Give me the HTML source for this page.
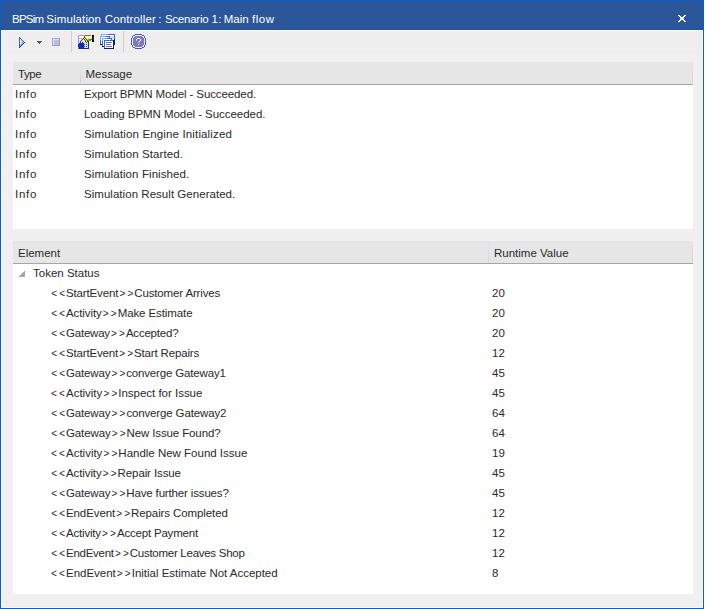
<!DOCTYPE html>
<html><head><meta charset="utf-8">
<style>
*{box-sizing:border-box;margin:0;padding:0}
html,body{width:705px;height:609px;overflow:hidden;background:#fff}
body{position:relative;font-family:"Liberation Sans",sans-serif;font-size:11.5px;color:#2a2a2a}
#win{position:absolute;left:0;top:0;width:704px;height:609px;background:#0b5fcb}
#title{position:absolute;left:1px;top:1px;width:702px;height:29px;background:#2b579a;border-bottom:1px solid #21509a}
#title .t{position:absolute;left:11px;top:10px;color:#fff;white-space:pre;line-height:16px}
#client{position:absolute;left:1px;top:30px;width:702px;height:578px;background:#f0f0f0;border:1px solid #fdfaf2}
.panel{position:absolute;left:13px;width:680px;background:#fefefe}
.hdr{position:absolute;left:0;top:0;width:680px;height:23px;background:#e6e6e6;border-bottom:1px solid #a5a5a5}
.sep{position:absolute;top:1px;width:1px;height:20px;background:linear-gradient(#e6e6e6,#d2d2d2)}
.txt{position:absolute;white-space:pre;line-height:20px;height:20px}
.ch{display:inline-block;width:8px;text-align:center;font-size:10px}
#tb{position:absolute;left:0;top:0}
</style></head><body>
<div id="win">
  <div id="title"><span class="t" style="left:11.05px;letter-spacing:-0.8px">BPSim</span><span class="t" style="left:45.34px;letter-spacing:0.103px">Simulation</span><span class="t" style="left:103.73px;letter-spacing:0.142px">Controller</span><span class="t" style="left:157.3px;letter-spacing:0px">:</span><span class="t" style="left:163.9px;letter-spacing:-0.236px">Scenario</span><span class="t" style="left:210.46px;letter-spacing:0.434px">1:</span><span class="t" style="left:222.85px;letter-spacing:-0.078px">Main</span><span class="t" style="left:250.88px;letter-spacing:0.6px">flow</span>
</div>
  <svg style="position:absolute;left:0;top:0" width="705" height="30" shape-rendering="crispEdges"><rect x="678" y="15" width="2" height="1" fill="#ffffff"/>
<rect x="684" y="15" width="2" height="1" fill="#ffffff"/>
<rect x="679" y="16" width="2" height="1" fill="#ffffff"/>
<rect x="683" y="16" width="2" height="1" fill="#ffffff"/>
<rect x="680" y="17" width="4" height="1" fill="#ffffff"/>
<rect x="680" y="18" width="1" height="1" fill="#a8bcdc"/>
<rect x="681" y="18" width="2" height="1" fill="#ffffff"/>
<rect x="683" y="18" width="1" height="1" fill="#a8bcdc"/>
<rect x="680" y="19" width="4" height="1" fill="#ffffff"/>
<rect x="679" y="20" width="2" height="1" fill="#ffffff"/>
<rect x="683" y="20" width="2" height="1" fill="#ffffff"/>
<rect x="678" y="21" width="2" height="1" fill="#ffffff"/>
<rect x="684" y="21" width="2" height="1" fill="#ffffff"/></svg>
</div>
<div id="client"></div>
<div style="position:absolute;left:8px;top:31px;width:694px;height:23px;background:#eeeeee"></div>
<svg id="tb" width="705" height="60" viewBox="0 0 705 60">
  <defs>
    <linearGradient id="gwin" x1="0" y1="0" x2="1" y2="1"><stop offset="0" stop-color="#8ab8f0"/><stop offset="1" stop-color="#0a2a80"/></linearGradient>
    <linearGradient id="gfront" x1="0" y1="0" x2="1" y2="1"><stop offset="0" stop-color="#4a7ad8"/><stop offset="1" stop-color="#101860"/></linearGradient>
  </defs>
  <g shape-rendering="crispEdges">
<rect x="19" y="37" width="1" height="1" fill="#5a4fc8"/>
<rect x="19" y="38" width="2" height="1" fill="#5a4fc8"/>
<rect x="19" y="39" width="1" height="1" fill="#5a4fc8"/>
<rect x="20" y="39" width="1" height="1" fill="#f2f8ff"/>
<rect x="21" y="39" width="1" height="1" fill="#5a4fc8"/>
<rect x="19" y="40" width="1" height="1" fill="#5a4fc8"/>
<rect x="20" y="40" width="1" height="1" fill="#f2f8ff"/>
<rect x="21" y="40" width="1" height="1" fill="#a6cef2"/>
<rect x="22" y="40" width="1" height="1" fill="#5a4fc8"/>
<rect x="19" y="41" width="1" height="1" fill="#5a4fc8"/>
<rect x="20" y="41" width="1" height="1" fill="#f2f8ff"/>
<rect x="21" y="41" width="2" height="1" fill="#a6cef2"/>
<rect x="23" y="41" width="1" height="1" fill="#5a4fc8"/>
<rect x="19" y="42" width="1" height="1" fill="#5a4fc8"/>
<rect x="20" y="42" width="1" height="1" fill="#f2f8ff"/>
<rect x="21" y="42" width="2" height="1" fill="#a6cef2"/>
<rect x="23" y="42" width="1" height="1" fill="#9a9ee0"/>
<rect x="24" y="42" width="1" height="1" fill="#1c34d8"/>
<rect x="25" y="42" width="1" height="1" fill="#a6cef2"/>
<rect x="19" y="43" width="1" height="1" fill="#5a4fc8"/>
<rect x="20" y="43" width="1" height="1" fill="#f2f8ff"/>
<rect x="21" y="43" width="1" height="1" fill="#a6cef2"/>
<rect x="22" y="43" width="1" height="1" fill="#9a9ee0"/>
<rect x="23" y="43" width="1" height="1" fill="#1c34d8"/>
<rect x="19" y="44" width="1" height="1" fill="#5a4fc8"/>
<rect x="20" y="44" width="1" height="1" fill="#a6cef2"/>
<rect x="21" y="44" width="1" height="1" fill="#9a9ee0"/>
<rect x="22" y="44" width="1" height="1" fill="#1c34d8"/>
<rect x="19" y="45" width="1" height="1" fill="#5a4fc8"/>
<rect x="20" y="45" width="1" height="1" fill="#9a9ee0"/>
<rect x="21" y="45" width="1" height="1" fill="#1c34d8"/>
<rect x="19" y="46" width="1" height="1" fill="#2a78d8"/>
<rect x="20" y="46" width="1" height="1" fill="#1c34d8"/>
<rect x="19" y="47" width="1" height="1" fill="#1c34d8"/><rect x="37" y="41" width="5" height="1" fill="#5a5a5a"/>
<rect x="38" y="42" width="3" height="1" fill="#5a5a5a"/>
<rect x="39" y="43" width="1" height="1" fill="#5a5a5a"/><rect x="52" y="38" width="7" height="1" fill="#a8a2dc"/>
<rect x="59" y="38" width="1" height="1" fill="#8c9ee2"/>
<rect x="52" y="39" width="1" height="1" fill="#a8a2dc"/>
<rect x="53" y="39" width="1" height="1" fill="#f0f8fc"/>
<rect x="54" y="39" width="5" height="1" fill="#d4e8f6"/>
<rect x="59" y="39" width="1" height="1" fill="#8c9ee2"/>
<rect x="52" y="40" width="1" height="1" fill="#a8a2dc"/>
<rect x="53" y="40" width="1" height="1" fill="#d4e8f6"/>
<rect x="54" y="40" width="5" height="1" fill="#c2bcdc"/>
<rect x="59" y="40" width="1" height="1" fill="#8c9ee2"/>
<rect x="52" y="41" width="1" height="1" fill="#a8a2dc"/>
<rect x="53" y="41" width="1" height="1" fill="#d4e8f6"/>
<rect x="54" y="41" width="5" height="1" fill="#c2bcdc"/>
<rect x="59" y="41" width="1" height="1" fill="#8c9ee2"/>
<rect x="52" y="42" width="1" height="1" fill="#a8a2dc"/>
<rect x="53" y="42" width="1" height="1" fill="#d4e8f6"/>
<rect x="54" y="42" width="5" height="1" fill="#c2bcdc"/>
<rect x="59" y="42" width="1" height="1" fill="#8c9ee2"/>
<rect x="52" y="43" width="1" height="1" fill="#a8a2dc"/>
<rect x="53" y="43" width="1" height="1" fill="#d4e8f6"/>
<rect x="54" y="43" width="5" height="1" fill="#c2bcdc"/>
<rect x="59" y="43" width="1" height="1" fill="#8c9ee2"/>
<rect x="52" y="44" width="1" height="1" fill="#a8a2dc"/>
<rect x="53" y="44" width="1" height="1" fill="#d4e8f6"/>
<rect x="54" y="44" width="5" height="1" fill="#c2bcdc"/>
<rect x="59" y="44" width="1" height="1" fill="#8c9ee2"/>
<rect x="52" y="45" width="8" height="1" fill="#8c9ee2"/><rect x="78" y="35" width="7" height="1" fill="#9a9ad6"/>
<rect x="85" y="35" width="6" height="1" fill="#7a7a2e"/>
<rect x="92" y="35" width="2" height="1" fill="#000000"/>
<rect x="78" y="36" width="1" height="1" fill="#9a9ad6"/>
<rect x="79" y="36" width="5" height="1" fill="#ffffff"/>
<rect x="84" y="36" width="1" height="1" fill="#4e4e12"/>
<rect x="85" y="36" width="7" height="1" fill="#f6f6c4"/>
<rect x="92" y="36" width="2" height="1" fill="#000000"/>
<rect x="78" y="37" width="1" height="1" fill="#9a9ad6"/>
<rect x="79" y="37" width="4" height="1" fill="#ffffff"/>
<rect x="83" y="37" width="1" height="1" fill="#e2e28a"/>
<rect x="84" y="37" width="1" height="1" fill="#4e4e12"/>
<rect x="85" y="37" width="1" height="1" fill="#e2e28a"/>
<rect x="86" y="37" width="6" height="1" fill="#f6f6c4"/>
<rect x="92" y="37" width="1" height="1" fill="#000000"/>
<rect x="93" y="37" width="1" height="1" fill="#404040"/>
<rect x="78" y="38" width="1" height="1" fill="#9a9ad6"/>
<rect x="79" y="38" width="3" height="1" fill="#b4b4e2"/>
<rect x="82" y="38" width="1" height="1" fill="#e2e28a"/>
<rect x="83" y="38" width="1" height="1" fill="#4e4e12"/>
<rect x="84" y="38" width="1" height="1" fill="#e2e28a"/>
<rect x="85" y="38" width="1" height="1" fill="#4e4e12"/>
<rect x="86" y="38" width="1" height="1" fill="#e2e28a"/>
<rect x="87" y="38" width="1" height="1" fill="#f6f6c4"/>
<rect x="88" y="38" width="4" height="1" fill="#e0e08a"/>
<rect x="92" y="38" width="1" height="1" fill="#000000"/>
<rect x="93" y="38" width="1" height="1" fill="#404040"/>
<rect x="78" y="39" width="1" height="1" fill="#9a9ad6"/>
<rect x="79" y="39" width="2" height="1" fill="#ffffff"/>
<rect x="81" y="39" width="1" height="1" fill="#e2e28a"/>
<rect x="82" y="39" width="1" height="1" fill="#4e4e12"/>
<rect x="83" y="39" width="1" height="1" fill="#e2e28a"/>
<rect x="84" y="39" width="1" height="1" fill="#4e4e12"/>
<rect x="85" y="39" width="1" height="1" fill="#e2e28a"/>
<rect x="86" y="39" width="1" height="1" fill="#4e4e12"/>
<rect x="87" y="39" width="1" height="1" fill="#e2e28a"/>
<rect x="88" y="39" width="1" height="1" fill="#9a9a50"/>
<rect x="89" y="39" width="3" height="1" fill="#7a7a2e"/>
<rect x="92" y="39" width="1" height="1" fill="#000000"/>
<rect x="93" y="39" width="1" height="1" fill="#404040"/>
<rect x="78" y="40" width="1" height="1" fill="#9a9ad6"/>
<rect x="79" y="40" width="1" height="1" fill="#c8e2f6"/>
<rect x="80" y="40" width="1" height="1" fill="#e2e28a"/>
<rect x="81" y="40" width="1" height="1" fill="#4e4e12"/>
<rect x="82" y="40" width="1" height="1" fill="#e2e28a"/>
<rect x="83" y="40" width="1" height="1" fill="#ffffff"/>
<rect x="84" y="40" width="1" height="1" fill="#e2e28a"/>
<rect x="85" y="40" width="1" height="1" fill="#4e4e12"/>
<rect x="86" y="40" width="1" height="1" fill="#e2e28a"/>
<rect x="87" y="40" width="1" height="1" fill="#4e4e12"/>
<rect x="88" y="40" width="1" height="1" fill="#9a9a50"/>
<rect x="89" y="40" width="2" height="1" fill="#7a7a2e"/>
<rect x="92" y="40" width="2" height="1" fill="#000000"/>
<rect x="78" y="41" width="1" height="1" fill="#9a9ad6"/>
<rect x="79" y="41" width="1" height="1" fill="#c8e2f6"/>
<rect x="80" y="41" width="1" height="1" fill="#4e4e12"/>
<rect x="81" y="41" width="1" height="1" fill="#e2e28a"/>
<rect x="82" y="41" width="3" height="1" fill="#c8e2f6"/>
<rect x="85" y="41" width="1" height="1" fill="#4e4e12"/>
<rect x="86" y="41" width="1" height="1" fill="#e2e28a"/>
<rect x="87" y="41" width="1" height="1" fill="#4e4e12"/>
<rect x="88" y="41" width="1" height="1" fill="#1c2a70"/>
<rect x="92" y="41" width="2" height="1" fill="#000000"/>
<rect x="78" y="42" width="1" height="1" fill="#9a9ad6"/>
<rect x="79" y="42" width="1" height="1" fill="#c8e2f6"/>
<rect x="80" y="42" width="1" height="1" fill="#1a2cb8"/>
<rect x="81" y="42" width="1" height="1" fill="#c8e2f6"/>
<rect x="82" y="42" width="1" height="1" fill="#1a2cb8"/>
<rect x="83" y="42" width="3" height="1" fill="#c8e2f6"/>
<rect x="86" y="42" width="1" height="1" fill="#4e4e12"/>
<rect x="87" y="42" width="1" height="1" fill="#c8e2f6"/>
<rect x="88" y="42" width="1" height="1" fill="#1c2a70"/>
<rect x="78" y="43" width="1" height="1" fill="#9a9ad6"/>
<rect x="79" y="43" width="5" height="1" fill="#1a2cb8"/>
<rect x="84" y="43" width="4" height="1" fill="#c8e2f6"/>
<rect x="88" y="43" width="1" height="1" fill="#1c2a70"/>
<rect x="78" y="44" width="7" height="1" fill="#1a2cb8"/>
<rect x="85" y="44" width="1" height="1" fill="#c8e2f6"/>
<rect x="86" y="44" width="1" height="1" fill="#4e4e12"/>
<rect x="87" y="44" width="1" height="1" fill="#c8e2f6"/>
<rect x="88" y="44" width="1" height="1" fill="#1c2a70"/>
<rect x="78" y="45" width="3" height="1" fill="#1a2cb8"/>
<rect x="81" y="45" width="1" height="1" fill="#000000"/>
<rect x="82" y="45" width="2" height="1" fill="#1a2cb8"/>
<rect x="84" y="45" width="4" height="1" fill="#c8e2f6"/>
<rect x="88" y="45" width="1" height="1" fill="#1c2a70"/>
<rect x="78" y="46" width="7" height="1" fill="#1a2cb8"/>
<rect x="85" y="46" width="1" height="1" fill="#c8e2f6"/>
<rect x="86" y="46" width="1" height="1" fill="#4e4e12"/>
<rect x="87" y="46" width="1" height="1" fill="#c8e2f6"/>
<rect x="88" y="46" width="1" height="1" fill="#1c2a70"/>
<rect x="78" y="47" width="1" height="1" fill="#3a7ad8"/>
<rect x="79" y="47" width="5" height="1" fill="#1a2cb8"/>
<rect x="84" y="47" width="4" height="1" fill="#c8e2f6"/>
<rect x="88" y="47" width="1" height="1" fill="#1c2a70"/>
<rect x="78" y="48" width="1" height="1" fill="#3a7ad8"/>
<rect x="79" y="48" width="1" height="1" fill="#1c2a70"/>
<rect x="80" y="48" width="1" height="1" fill="#1a2cb8"/>
<rect x="81" y="48" width="1" height="1" fill="#1c2a70"/>
<rect x="82" y="48" width="1" height="1" fill="#1a2cb8"/>
<rect x="83" y="48" width="6" height="1" fill="#1c2a70"/>
  <rect x="71" y="31" width="1" height="21" fill="#d0d0d0"/>
  <rect x="123" y="31" width="1" height="21" fill="#d0d0d0"/>
  </g>
  <g shape-rendering="crispEdges"><rect x="101" y="34" width="7" height="1" fill="#7eacea"/>
<rect x="108" y="34" width="7" height="1" fill="#3c68cc"/>
<rect x="101" y="35" width="1" height="1" fill="#7eacea"/>
<rect x="102" y="35" width="12" height="1" fill="#ffffff"/>
<rect x="114" y="35" width="1" height="1" fill="#3c68cc"/>
<rect x="100" y="36" width="6" height="1" fill="#7eacea"/>
<rect x="106" y="36" width="4" height="1" fill="#3c68cc"/>
<rect x="110" y="36" width="4" height="1" fill="#d4e6f8"/>
<rect x="114" y="36" width="1" height="1" fill="#3c68cc"/>
<rect x="100" y="37" width="1" height="1" fill="#7eacea"/>
<rect x="101" y="37" width="8" height="1" fill="#ffffff"/>
<rect x="109" y="37" width="1" height="1" fill="#3c68cc"/>
<rect x="110" y="37" width="4" height="1" fill="#d4e6f8"/>
<rect x="114" y="37" width="1" height="1" fill="#3c68cc"/>
<rect x="100" y="38" width="1" height="1" fill="#7eacea"/>
<rect x="101" y="38" width="1" height="1" fill="#ffffff"/>
<rect x="102" y="38" width="5" height="1" fill="#7eacea"/>
<rect x="107" y="38" width="5" height="1" fill="#3c68cc"/>
<rect x="112" y="38" width="2" height="1" fill="#d4e6f8"/>
<rect x="114" y="38" width="1" height="1" fill="#3c68cc"/>
<rect x="100" y="39" width="1" height="1" fill="#7eacea"/>
<rect x="101" y="39" width="1" height="1" fill="#ffffff"/>
<rect x="102" y="39" width="1" height="1" fill="#7eacea"/>
<rect x="103" y="39" width="8" height="1" fill="#ffffff"/>
<rect x="111" y="39" width="1" height="1" fill="#3c68cc"/>
<rect x="112" y="39" width="2" height="1" fill="#d4e6f8"/>
<rect x="114" y="39" width="1" height="1" fill="#141e66"/>
<rect x="100" y="40" width="1" height="1" fill="#3c68cc"/>
<rect x="101" y="40" width="1" height="1" fill="#ffffff"/>
<rect x="102" y="40" width="1" height="1" fill="#7eacea"/>
<rect x="103" y="40" width="1" height="1" fill="#ffffff"/>
<rect x="104" y="40" width="9" height="1" fill="#3c68cc"/>
<rect x="113" y="40" width="2" height="1" fill="#141e66"/>
<rect x="100" y="41" width="1" height="1" fill="#3c68cc"/>
<rect x="101" y="41" width="1" height="1" fill="#ffffff"/>
<rect x="102" y="41" width="1" height="1" fill="#3c68cc"/>
<rect x="103" y="41" width="1" height="1" fill="#ffffff"/>
<rect x="104" y="41" width="1" height="1" fill="#3c68cc"/>
<rect x="105" y="41" width="8" height="1" fill="#ffffff"/>
<rect x="113" y="41" width="2" height="1" fill="#141e66"/>
<rect x="100" y="42" width="1" height="1" fill="#3c68cc"/>
<rect x="101" y="42" width="1" height="1" fill="#ffffff"/>
<rect x="102" y="42" width="1" height="1" fill="#3c68cc"/>
<rect x="103" y="42" width="1" height="1" fill="#ffffff"/>
<rect x="104" y="42" width="1" height="1" fill="#3c68cc"/>
<rect x="105" y="42" width="1" height="1" fill="#ffffff"/>
<rect x="106" y="42" width="6" height="1" fill="#7474c4"/>
<rect x="112" y="42" width="1" height="1" fill="#ffffff"/>
<rect x="113" y="42" width="2" height="1" fill="#141e66"/>
<rect x="100" y="43" width="1" height="1" fill="#3c68cc"/>
<rect x="101" y="43" width="1" height="1" fill="#ffffff"/>
<rect x="102" y="43" width="1" height="1" fill="#3c68cc"/>
<rect x="103" y="43" width="1" height="1" fill="#ffffff"/>
<rect x="104" y="43" width="1" height="1" fill="#3c68cc"/>
<rect x="105" y="43" width="8" height="1" fill="#ffffff"/>
<rect x="113" y="43" width="2" height="1" fill="#141e66"/>
<rect x="100" y="44" width="2" height="1" fill="#141e66"/>
<rect x="102" y="44" width="1" height="1" fill="#3c68cc"/>
<rect x="103" y="44" width="1" height="1" fill="#ffffff"/>
<rect x="104" y="44" width="1" height="1" fill="#3c68cc"/>
<rect x="105" y="44" width="1" height="1" fill="#ffffff"/>
<rect x="106" y="44" width="5" height="1" fill="#7474c4"/>
<rect x="111" y="44" width="2" height="1" fill="#ffffff"/>
<rect x="113" y="44" width="2" height="1" fill="#141e66"/>
<rect x="102" y="45" width="1" height="1" fill="#3c68cc"/>
<rect x="103" y="45" width="1" height="1" fill="#ffffff"/>
<rect x="104" y="45" width="1" height="1" fill="#3c68cc"/>
<rect x="105" y="45" width="8" height="1" fill="#ffffff"/>
<rect x="113" y="45" width="1" height="1" fill="#141e66"/>
<rect x="102" y="46" width="2" height="1" fill="#141e66"/>
<rect x="104" y="46" width="1" height="1" fill="#3c68cc"/>
<rect x="105" y="46" width="1" height="1" fill="#ffffff"/>
<rect x="106" y="46" width="6" height="1" fill="#7474c4"/>
<rect x="112" y="46" width="1" height="1" fill="#ffffff"/>
<rect x="113" y="46" width="1" height="1" fill="#141e66"/>
<rect x="104" y="47" width="1" height="1" fill="#3c68cc"/>
<rect x="105" y="47" width="8" height="1" fill="#ffffff"/>
<rect x="113" y="47" width="1" height="1" fill="#141e66"/>
<rect x="104" y="48" width="10" height="1" fill="#141e66"/><rect x="135" y="34" width="7" height="1" fill="#3c5ccc"/>
<rect x="133" y="35" width="2" height="1" fill="#3c5ccc"/>
<rect x="135" y="35" width="7" height="1" fill="#eeeefa"/>
<rect x="142" y="35" width="2" height="1" fill="#3c5ccc"/>
<rect x="132" y="36" width="1" height="1" fill="#3c5ccc"/>
<rect x="133" y="36" width="2" height="1" fill="#eeeefa"/>
<rect x="135" y="36" width="7" height="1" fill="#7c78c6"/>
<rect x="142" y="36" width="2" height="1" fill="#eeeefa"/>
<rect x="144" y="36" width="1" height="1" fill="#3c5ccc"/>
<rect x="132" y="37" width="1" height="1" fill="#3c5ccc"/>
<rect x="133" y="37" width="1" height="1" fill="#eeeefa"/>
<rect x="134" y="37" width="9" height="1" fill="#7c78c6"/>
<rect x="143" y="37" width="1" height="1" fill="#eeeefa"/>
<rect x="144" y="37" width="1" height="1" fill="#3c5ccc"/>
<rect x="131" y="38" width="1" height="1" fill="#3c5ccc"/>
<rect x="132" y="38" width="1" height="1" fill="#eeeefa"/>
<rect x="133" y="38" width="4" height="1" fill="#7c78c6"/>
<rect x="137" y="38" width="3" height="1" fill="#ffffff"/>
<rect x="140" y="38" width="4" height="1" fill="#7c78c6"/>
<rect x="144" y="38" width="1" height="1" fill="#eeeefa"/>
<rect x="145" y="38" width="1" height="1" fill="#3c5ccc"/>
<rect x="131" y="39" width="1" height="1" fill="#3c5ccc"/>
<rect x="132" y="39" width="1" height="1" fill="#eeeefa"/>
<rect x="133" y="39" width="3" height="1" fill="#7c78c6"/>
<rect x="136" y="39" width="1" height="1" fill="#ffffff"/>
<rect x="137" y="39" width="3" height="1" fill="#7c78c6"/>
<rect x="140" y="39" width="1" height="1" fill="#ffffff"/>
<rect x="141" y="39" width="3" height="1" fill="#7c78c6"/>
<rect x="144" y="39" width="1" height="1" fill="#eeeefa"/>
<rect x="145" y="39" width="1" height="1" fill="#3c5ccc"/>
<rect x="131" y="40" width="1" height="1" fill="#3c5ccc"/>
<rect x="132" y="40" width="1" height="1" fill="#eeeefa"/>
<rect x="133" y="40" width="3" height="1" fill="#7c78c6"/>
<rect x="136" y="40" width="1" height="1" fill="#c8c6ea"/>
<rect x="137" y="40" width="3" height="1" fill="#7c78c6"/>
<rect x="140" y="40" width="1" height="1" fill="#ffffff"/>
<rect x="141" y="40" width="3" height="1" fill="#7c78c6"/>
<rect x="144" y="40" width="1" height="1" fill="#eeeefa"/>
<rect x="145" y="40" width="1" height="1" fill="#3c5ccc"/>
<rect x="131" y="41" width="1" height="1" fill="#3c5ccc"/>
<rect x="132" y="41" width="1" height="1" fill="#eeeefa"/>
<rect x="133" y="41" width="6" height="1" fill="#7c78c6"/>
<rect x="139" y="41" width="1" height="1" fill="#ffffff"/>
<rect x="140" y="41" width="4" height="1" fill="#7c78c6"/>
<rect x="144" y="41" width="1" height="1" fill="#eeeefa"/>
<rect x="145" y="41" width="1" height="1" fill="#3c5ccc"/>
<rect x="131" y="42" width="1" height="1" fill="#3c5ccc"/>
<rect x="132" y="42" width="1" height="1" fill="#eeeefa"/>
<rect x="133" y="42" width="5" height="1" fill="#7c78c6"/>
<rect x="138" y="42" width="1" height="1" fill="#ffffff"/>
<rect x="139" y="42" width="5" height="1" fill="#7c78c6"/>
<rect x="144" y="42" width="1" height="1" fill="#eeeefa"/>
<rect x="145" y="42" width="1" height="1" fill="#3c5ccc"/>
<rect x="131" y="43" width="1" height="1" fill="#3c5ccc"/>
<rect x="132" y="43" width="1" height="1" fill="#eeeefa"/>
<rect x="133" y="43" width="11" height="1" fill="#7c78c6"/>
<rect x="144" y="43" width="1" height="1" fill="#eeeefa"/>
<rect x="145" y="43" width="1" height="1" fill="#3c5ccc"/>
<rect x="131" y="44" width="1" height="1" fill="#3c5ccc"/>
<rect x="132" y="44" width="1" height="1" fill="#eeeefa"/>
<rect x="133" y="44" width="5" height="1" fill="#7c78c6"/>
<rect x="138" y="44" width="1" height="1" fill="#ffffff"/>
<rect x="139" y="44" width="5" height="1" fill="#7c78c6"/>
<rect x="144" y="44" width="1" height="1" fill="#eeeefa"/>
<rect x="145" y="44" width="1" height="1" fill="#3c5ccc"/>
<rect x="132" y="45" width="1" height="1" fill="#3c5ccc"/>
<rect x="133" y="45" width="1" height="1" fill="#eeeefa"/>
<rect x="134" y="45" width="9" height="1" fill="#7c78c6"/>
<rect x="143" y="45" width="1" height="1" fill="#eeeefa"/>
<rect x="144" y="45" width="1" height="1" fill="#3c5ccc"/>
<rect x="132" y="46" width="1" height="1" fill="#3c5ccc"/>
<rect x="133" y="46" width="2" height="1" fill="#eeeefa"/>
<rect x="135" y="46" width="7" height="1" fill="#7c78c6"/>
<rect x="142" y="46" width="2" height="1" fill="#eeeefa"/>
<rect x="144" y="46" width="1" height="1" fill="#3c5ccc"/>
<rect x="133" y="47" width="2" height="1" fill="#3c5ccc"/>
<rect x="135" y="47" width="7" height="1" fill="#eeeefa"/>
<rect x="142" y="47" width="2" height="1" fill="#3c5ccc"/>
<rect x="135" y="48" width="7" height="1" fill="#3c5ccc"/></g>
</svg>

<!-- upper panel -->
<div class="panel" style="top:62px;height:167px">
  <div class="hdr"><div class="sep" style="left:67px"></div><div class="sep" style="left:679px"></div></div>
  <div class="txt" style="left:5px;top:2px;letter-spacing:-0.45px">Type</div>
  <div class="txt" style="left:72.5px;top:2px">Message</div>
  <div class="txt" style="left:2px;top:22px;letter-spacing:0.7px">Info</div><div class="txt" style="left:71px;top:22px;letter-spacing:-0.103px">Export BPMN Model - Succeeded.</div>
  <div class="txt" style="left:2px;top:42px;letter-spacing:0.7px">Info</div><div class="txt" style="left:71px;top:42px;letter-spacing:-0.046px">Loading BPMN Model - Succeeded.</div>
  <div class="txt" style="left:2px;top:62px;letter-spacing:0.7px">Info</div><div class="txt" style="left:71px;top:62px;letter-spacing:0.143px">Simulation Engine Initialized</div>
  <div class="txt" style="left:2px;top:82px;letter-spacing:0.7px">Info</div><div class="txt" style="left:71px;top:82px;letter-spacing:0.094px">Simulation Started.</div>
  <div class="txt" style="left:2px;top:102px;letter-spacing:0.7px">Info</div><div class="txt" style="left:71px;top:102px;letter-spacing:0.09px">Simulation Finished.</div>
  <div class="txt" style="left:2px;top:122px;letter-spacing:0.7px">Info</div><div class="txt" style="left:71px;top:122px;letter-spacing:0.037px">Simulation Result Generated.</div>
</div>

<!-- lower panel -->
<div class="panel" style="top:241px;height:353px">
  <div class="hdr"><div class="sep" style="left:475px"></div><div class="sep" style="left:679px"></div></div>
  <div class="txt" style="left:5px;top:2px">Element</div>
  <div class="txt" style="left:481px;top:2px">Runtime Value</div>
  <svg style="position:absolute;left:0;top:0" width="40" height="40" shape-rendering="crispEdges"><rect x="11" y="30" width="1" height="6" fill="#a4a4a4"/><rect x="10" y="31" width="1" height="5" fill="#a4a4a4"/><rect x="9" y="32" width="1" height="4" fill="#a4a4a4"/><rect x="8" y="33" width="1" height="3" fill="#a4a4a4"/><rect x="7" y="34" width="1" height="2" fill="#a4a4a4"/><rect x="6" y="35" width="1" height="1" fill="#a4a4a4"/></svg>
  <div class="txt" style="left:20px;top:22px">Token Status</div>
  <div class="txt" style="left:37px;top:42px;letter-spacing:-0.144px"><span class="ch">&lt;</span><span class="ch">&lt;</span>StartEvent<span class="ch">&gt;</span><span class="ch">&gt;</span>Customer Arrives</div><div class="txt" style="left:479px;top:42px">20</div>
  <div class="txt" style="left:37px;top:62px;letter-spacing:-0.095px"><span class="ch">&lt;</span><span class="ch">&lt;</span>Activity<span class="ch">&gt;</span><span class="ch">&gt;</span>Make Estimate</div><div class="txt" style="left:479px;top:62px">20</div>
  <div class="txt" style="left:37px;top:82px;letter-spacing:-0.214px"><span class="ch">&lt;</span><span class="ch">&lt;</span>Gateway<span class="ch">&gt;</span><span class="ch">&gt;</span>Accepted?</div><div class="txt" style="left:479px;top:82px">20</div>
  <div class="txt" style="left:37px;top:102px;letter-spacing:-0.163px"><span class="ch">&lt;</span><span class="ch">&lt;</span>StartEvent<span class="ch">&gt;</span><span class="ch">&gt;</span>Start Repairs</div><div class="txt" style="left:479px;top:102px">12</div>
  <div class="txt" style="left:37px;top:122px;letter-spacing:-0.166px"><span class="ch">&lt;</span><span class="ch">&lt;</span>Gateway<span class="ch">&gt;</span><span class="ch">&gt;</span>converge Gateway1</div><div class="txt" style="left:479px;top:122px">45</div>
  <div class="txt" style="left:37px;top:142px;letter-spacing:-0.017px"><span class="ch">&lt;</span><span class="ch">&lt;</span>Activity<span class="ch">&gt;</span><span class="ch">&gt;</span>Inspect for Issue</div><div class="txt" style="left:479px;top:142px">45</div>
  <div class="txt" style="left:37px;top:162px;letter-spacing:-0.143px"><span class="ch">&lt;</span><span class="ch">&lt;</span>Gateway<span class="ch">&gt;</span><span class="ch">&gt;</span>converge Gateway2</div><div class="txt" style="left:479px;top:162px">64</div>
  <div class="txt" style="left:37px;top:182px;letter-spacing:-0.122px"><span class="ch">&lt;</span><span class="ch">&lt;</span>Gateway<span class="ch">&gt;</span><span class="ch">&gt;</span>New Issue Found?</div><div class="txt" style="left:479px;top:182px">64</div>
  <div class="txt" style="left:37px;top:202px;letter-spacing:-0.009px"><span class="ch">&lt;</span><span class="ch">&lt;</span>Activity<span class="ch">&gt;</span><span class="ch">&gt;</span>Handle New Found Issue</div><div class="txt" style="left:479px;top:202px">19</div>
  <div class="txt" style="left:37px;top:222px;letter-spacing:-0.105px"><span class="ch">&lt;</span><span class="ch">&lt;</span>Activity<span class="ch">&gt;</span><span class="ch">&gt;</span>Repair Issue</div><div class="txt" style="left:479px;top:222px">45</div>
  <div class="txt" style="left:37px;top:242px;letter-spacing:-0.154px"><span class="ch">&lt;</span><span class="ch">&lt;</span>Gateway<span class="ch">&gt;</span><span class="ch">&gt;</span>Have further issues?</div><div class="txt" style="left:479px;top:242px">45</div>
  <div class="txt" style="left:37px;top:262px;letter-spacing:-0.101px"><span class="ch">&lt;</span><span class="ch">&lt;</span>EndEvent<span class="ch">&gt;</span><span class="ch">&gt;</span>Repairs Completed</div><div class="txt" style="left:479px;top:262px">12</div>
  <div class="txt" style="left:37px;top:282px;letter-spacing:-0.19px"><span class="ch">&lt;</span><span class="ch">&lt;</span>Activity<span class="ch">&gt;</span><span class="ch">&gt;</span>Accept Payment</div><div class="txt" style="left:479px;top:282px">12</div>
  <div class="txt" style="left:37px;top:302px;letter-spacing:-0.267px"><span class="ch">&lt;</span><span class="ch">&lt;</span>EndEvent<span class="ch">&gt;</span><span class="ch">&gt;</span>Customer Leaves Shop</div><div class="txt" style="left:479px;top:302px">12</div>
  <div class="txt" style="left:37px;top:322px;letter-spacing:-0.018px"><span class="ch">&lt;</span><span class="ch">&lt;</span>EndEvent<span class="ch">&gt;</span><span class="ch">&gt;</span>Initial Estimate Not Accepted</div><div class="txt" style="left:479px;top:322px">8</div>
</div>
</body></html>
